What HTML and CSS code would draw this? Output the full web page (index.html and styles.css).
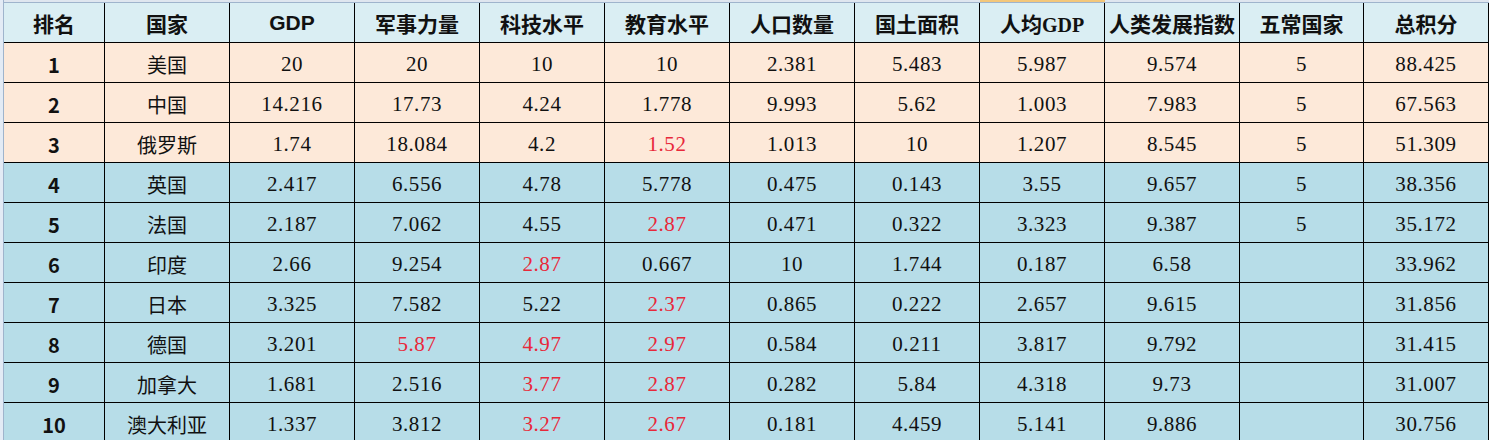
FILE: index.html
```html
<!DOCTYPE html>
<html lang="zh-CN">
<head>
<meta charset="utf-8">
<title>国家综合实力排名</title>
<link rel="stylesheet" href="styles.css">
</head>
<body>
<div class="sheet">
  <div class="rowhdr"></div>
  <div class="main">
    <div class="colhdr">
      <span></span><span></span><span></span><span></span><span></span><span></span><span></span><span></span><span class="sel"></span><span></span><span></span><span></span>
    </div>
    <div class="row head">
      <div class="c">排名</div>
      <div class="c">国家</div>
      <div class="c latin">GDP</div>
      <div class="c">军事力量</div>
      <div class="c">科技水平</div>
      <div class="c">教育水平</div>
      <div class="c">人口数量</div>
      <div class="c">国土面积</div>
      <div class="c">人均<span class="serif">GDP</span></div>
      <div class="c">人类发展指数</div>
      <div class="c">五常国家</div>
      <div class="c">总积分</div>
    </div>

    <div class="row peach">
      <div class="c rank">1</div><div class="c name">美国</div>
      <div class="c num">20</div><div class="c num">20</div><div class="c num">10</div><div class="c num">10</div>
      <div class="c num">2.381</div><div class="c num">5.483</div><div class="c num">5.987</div><div class="c num">9.574</div>
      <div class="c num">5</div><div class="c num">88.425</div>
    </div>
    <div class="row peach">
      <div class="c rank">2</div><div class="c name">中国</div>
      <div class="c num">14.216</div><div class="c num">17.73</div><div class="c num">4.24</div><div class="c num">1.778</div>
      <div class="c num">9.993</div><div class="c num">5.62</div><div class="c num">1.003</div><div class="c num">7.983</div>
      <div class="c num">5</div><div class="c num">67.563</div>
    </div>
    <div class="row peach">
      <div class="c rank">3</div><div class="c name">俄罗斯</div>
      <div class="c num">1.74</div><div class="c num">18.084</div><div class="c num">4.2</div><div class="c num red">1.52</div>
      <div class="c num">1.013</div><div class="c num">10</div><div class="c num">1.207</div><div class="c num">8.545</div>
      <div class="c num">5</div><div class="c num">51.309</div>
    </div>
    <div class="row blue">
      <div class="c rank">4</div><div class="c name">英国</div>
      <div class="c num">2.417</div><div class="c num">6.556</div><div class="c num">4.78</div><div class="c num">5.778</div>
      <div class="c num">0.475</div><div class="c num">0.143</div><div class="c num">3.55</div><div class="c num">9.657</div>
      <div class="c num">5</div><div class="c num">38.356</div>
    </div>
    <div class="row blue">
      <div class="c rank">5</div><div class="c name">法国</div>
      <div class="c num">2.187</div><div class="c num">7.062</div><div class="c num">4.55</div><div class="c num red">2.87</div>
      <div class="c num">0.471</div><div class="c num">0.322</div><div class="c num">3.323</div><div class="c num">9.387</div>
      <div class="c num">5</div><div class="c num">35.172</div>
    </div>
    <div class="row blue">
      <div class="c rank">6</div><div class="c name">印度</div>
      <div class="c num">2.66</div><div class="c num">9.254</div><div class="c num red">2.87</div><div class="c num">0.667</div>
      <div class="c num">10</div><div class="c num">1.744</div><div class="c num">0.187</div><div class="c num">6.58</div>
      <div class="c num"></div><div class="c num">33.962</div>
    </div>
    <div class="row blue">
      <div class="c rank">7</div><div class="c name">日本</div>
      <div class="c num">3.325</div><div class="c num">7.582</div><div class="c num">5.22</div><div class="c num red">2.37</div>
      <div class="c num">0.865</div><div class="c num">0.222</div><div class="c num">2.657</div><div class="c num">9.615</div>
      <div class="c num"></div><div class="c num">31.856</div>
    </div>
    <div class="row blue">
      <div class="c rank">8</div><div class="c name">德国</div>
      <div class="c num">3.201</div><div class="c num red">5.87</div><div class="c num red">4.97</div><div class="c num red">2.97</div>
      <div class="c num">0.584</div><div class="c num">0.211</div><div class="c num">3.817</div><div class="c num">9.792</div>
      <div class="c num"></div><div class="c num">31.415</div>
    </div>
    <div class="row blue">
      <div class="c rank">9</div><div class="c name">加拿大</div>
      <div class="c num">1.681</div><div class="c num">2.516</div><div class="c num red">3.77</div><div class="c num red">2.87</div>
      <div class="c num">0.282</div><div class="c num">5.84</div><div class="c num">4.318</div><div class="c num">9.73</div>
      <div class="c num"></div><div class="c num">31.007</div>
    </div>
    <div class="row blue">
      <div class="c rank">10</div><div class="c name">澳大利亚</div>
      <div class="c num">1.337</div><div class="c num">3.812</div><div class="c num red">3.27</div><div class="c num red">2.67</div>
      <div class="c num">0.181</div><div class="c num">4.459</div><div class="c num">5.141</div><div class="c num">9.886</div>
      <div class="c num"></div><div class="c num">30.756</div>
    </div>
  </div>
</div>
</body>
</html>
```

FILE: styles.css
```css
html, body {
  margin: 0;
  padding: 0;
  background: #ffffff;
  overflow: hidden;
}

body {
  font-family: "Noto Sans CJK SC", "Noto Sans", sans-serif;
  color: #111111;
}

.sheet {
  display: flex;
  width: 1489px;
  height: 440px;
  overflow: hidden;
}

.rowhdr {
  width: 3px;
  flex: none;
  background: #e3ebf5;
  border-right: 1px solid #9fb4cc;
}

.main {
  flex: none;
  width: 1485px;
}

.colhdr,
.row {
  display: grid;
  grid-template-columns: 101px repeat(8, 125px) 135px 124px 125px;
}

.colhdr {
  height: 2px;
  background: #dfe6ef;
  border-bottom: 1px solid #9fb4cc;
}

.colhdr .sel {
  background: #f3c77a;
}

.c {
  box-sizing: border-box;
  height: 40px;
  border-right: 1px solid #000000;
  border-bottom: 1px solid #000000;
  display: flex;
  align-items: center;
  justify-content: center;
  padding-top: 3px;
  white-space: nowrap;
}

.head .c {
  background: #daeef3;
  font-size: 21px;
  font-weight: 700;
  padding-top: 0;
  align-items: baseline;
  line-height: 40px;
}

.head .latin {
  font-family: "Liberation Sans", Arial, sans-serif;
  font-size: 21px;
}

.head .serif {
  font-family: "Liberation Serif", "Times New Roman", serif;
  font-size: 20px;
  font-weight: 700;
}

.peach .c {
  background: #fde9d9;
}

.blue .c {
  background: #b7dde8;
}

.rank {
  font-family: "Noto Sans CJK SC", "Noto Sans", sans-serif;
  font-weight: 700;
  font-size: 20px;
}

.name {
  font-size: 20px;
  font-weight: 400;
}

.num {
  font-family: "Liberation Serif", "Times New Roman", serif;
  font-size: 21px;
  letter-spacing: 0.6px;
}

.red {
  color: #e8283a;
}
```
